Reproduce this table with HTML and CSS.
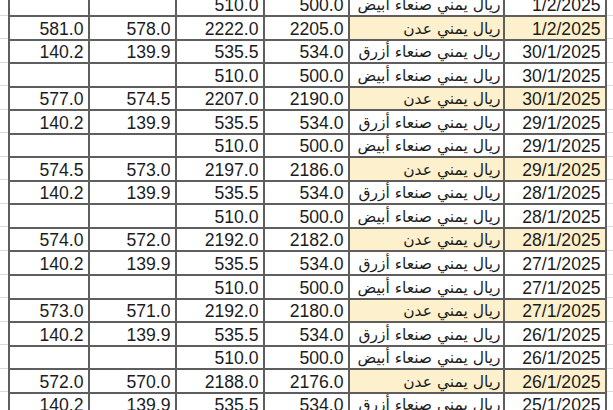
FILE: index.html
```html
<!DOCTYPE html>
<html lang="ar">
<head>
<meta charset="utf-8">
<title>أسعار الصرف</title>
<link rel="stylesheet" href="styles.css">
</head>
<body>
<div class="sheet">
<table class="rates">
<colgroup>
<col class="c-a"><col class="c-b"><col class="c-c"><col class="c-d"><col class="c-e"><col class="c-f">
</colgroup>
<tbody>
<tr><td></td><td></td><td>510.0</td><td>500.0</td><td class="name">ريال يمني صنعاء أبيض</td><td>1/2/2025</td></tr>
<tr class="aden"><td>581.0</td><td>578.0</td><td>2222.0</td><td>2205.0</td><td class="name">ريال يمني عدن</td><td>1/2/2025</td></tr>
<tr><td>140.2</td><td>139.9</td><td>535.5</td><td>534.0</td><td class="name">ريال يمني صنعاء أزرق</td><td>30/1/2025</td></tr>
<tr><td></td><td></td><td>510.0</td><td>500.0</td><td class="name">ريال يمني صنعاء أبيض</td><td>30/1/2025</td></tr>
<tr class="aden"><td>577.0</td><td>574.5</td><td>2207.0</td><td>2190.0</td><td class="name">ريال يمني عدن</td><td>30/1/2025</td></tr>
<tr><td>140.2</td><td>139.9</td><td>535.5</td><td>534.0</td><td class="name">ريال يمني صنعاء أزرق</td><td>29/1/2025</td></tr>
<tr><td></td><td></td><td>510.0</td><td>500.0</td><td class="name">ريال يمني صنعاء أبيض</td><td>29/1/2025</td></tr>
<tr class="aden"><td>574.5</td><td>573.0</td><td>2197.0</td><td>2186.0</td><td class="name">ريال يمني عدن</td><td>29/1/2025</td></tr>
<tr><td>140.2</td><td>139.9</td><td>535.5</td><td>534.0</td><td class="name">ريال يمني صنعاء أزرق</td><td>28/1/2025</td></tr>
<tr><td></td><td></td><td>510.0</td><td>500.0</td><td class="name">ريال يمني صنعاء أبيض</td><td>28/1/2025</td></tr>
<tr class="aden"><td>574.0</td><td>572.0</td><td>2192.0</td><td>2182.0</td><td class="name">ريال يمني عدن</td><td>28/1/2025</td></tr>
<tr><td>140.2</td><td>139.9</td><td>535.5</td><td>534.0</td><td class="name">ريال يمني صنعاء أزرق</td><td>27/1/2025</td></tr>
<tr><td></td><td></td><td>510.0</td><td>500.0</td><td class="name">ريال يمني صنعاء أبيض</td><td>27/1/2025</td></tr>
<tr class="aden"><td>573.0</td><td>571.0</td><td>2192.0</td><td>2180.0</td><td class="name">ريال يمني عدن</td><td>27/1/2025</td></tr>
<tr><td>140.2</td><td>139.9</td><td>535.5</td><td>534.0</td><td class="name">ريال يمني صنعاء أزرق</td><td>26/1/2025</td></tr>
<tr><td></td><td></td><td>510.0</td><td>500.0</td><td class="name">ريال يمني صنعاء أبيض</td><td>26/1/2025</td></tr>
<tr class="aden"><td>572.0</td><td>570.0</td><td>2188.0</td><td>2176.0</td><td class="name">ريال يمني عدن</td><td>26/1/2025</td></tr>
<tr><td>140.2</td><td>139.9</td><td>535.5</td><td>534.0</td><td class="name">ريال يمني صنعاء أزرق</td><td>25/1/2025</td></tr>
</tbody>
</table>
</div>
</body>
</html>
```

FILE: styles.css
```css
html, body {
  margin: 0;
  padding: 0;
  background: #ffffff;
}

body {
  width: 613px;
  height: 410px;
  overflow: hidden;
}

.sheet {
  height: 410px;
  overflow: hidden;
  background-image: repeating-linear-gradient(to bottom,
    transparent 0,
    transparent 22.55px,
    #d9d9d9 22.55px,
    #d9d9d9 23.55px);
  background-position: 0 -8.05px;
}

.rates {
  margin: -8.55px 0 0 8px;
  width: 597px;
  border-collapse: collapse;
  table-layout: fixed;
  font-family: "Liberation Sans", "DejaVu Sans", sans-serif;
  font-size: 17.6px;
  color: #1c1c1c;
  background: #ffffff;
}

.c-a { width: 80px; }
.c-b { width: 87px; }
.c-c { width: 88px; }
.c-d { width: 85px; }
.c-e { width: 155px; }
.c-f { width: 102px; }

.rates tr {
  height: 23.55px;
}

.rates td {
  border: 2px solid #5e5e5e;
  padding: 1.55px 4.5px 0 0;
  height: 20px;
  line-height: 20px;
  vertical-align: top;
  text-align: right;
  white-space: nowrap;
  overflow: hidden;
}

.rates td.name {
  direction: rtl;
  text-align: right;
  padding-right: 2.5px;
  font-family: "DejaVu Sans", sans-serif;
  font-size: 15.5px;
}

.rates tr.aden td.name,
.rates tr.aden td:last-child {
  background: #fdf0cd;
}
```
